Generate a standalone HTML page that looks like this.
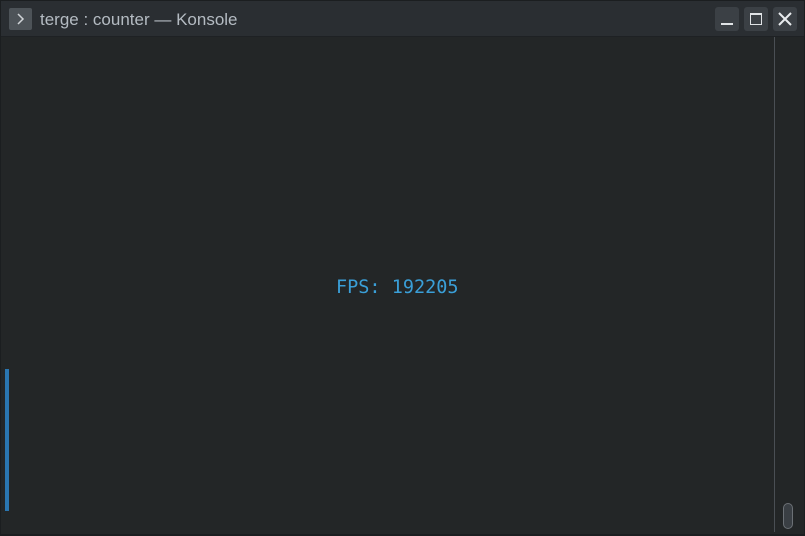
<!DOCTYPE html>
<html><head><style>
body{margin:0;width:805px;height:536px;background:#1b1e20;overflow:hidden;position:relative;font-family:"Liberation Sans",sans-serif}
.win{position:absolute;left:1px;top:1px;width:803px;height:533px;background:#232627}
.tb{position:absolute;left:0;top:0;width:803px;height:35px;background:#2a2e32;border-bottom:1px solid #1e2124}
.ic{position:absolute;left:8px;top:7px;width:23px;height:22px;background:#4d5358;border-radius:2px}
.title{position:absolute;left:39px;top:9px;color:#b4bbc2;font-size:17px}
.btn{position:absolute;top:6px;width:24px;height:24px;background:#3b4045;border-radius:3px}
.fps{position:absolute;left:335px;top:276px;color:#3a9fd8;font-family:"DejaVu Sans Mono","Liberation Mono",monospace;font-size:18.5px}
</style></head><body>
<div class="win">
<div class="tb">
<div class="ic"><svg width="23" height="22"><path d="M9 6 L14 11 L9 16" stroke="#d0d4d8" stroke-width="1.5" fill="none"/></svg></div>
<div class="title">terge : counter — Konsole</div>
<div class="btn" style="left:714px"><svg width="24" height="24"><rect x="6" y="16" width="12" height="2" fill="#e0e3e6"/></svg></div>
<div class="btn" style="left:743px"><svg width="24" height="24"><rect x="6.5" y="6.5" width="11" height="11" stroke="#e0e3e6" fill="none"/><rect x="6" y="6" width="12" height="2" fill="#e0e3e6"/></svg></div>
<div class="btn" style="left:772px"><svg width="24" height="24"><path d="M6 6 L18 18 M18 6 L6 18" stroke="#e8ebee" stroke-width="2"/></svg></div>
</div>
<div class="fps">FPS: 192205</div>
<div style="position:absolute;left:4px;top:368px;width:4px;height:142px;background:#2a76b0"></div>
<div style="position:absolute;left:773px;top:36px;width:1px;height:495px;background:#4a4f54"></div>
<div style="position:absolute;left:782px;top:502px;width:8px;height:24px;border:1px solid #6b7075;border-radius:5px;background:#3a3f44"></div>
</div>
</body></html>
